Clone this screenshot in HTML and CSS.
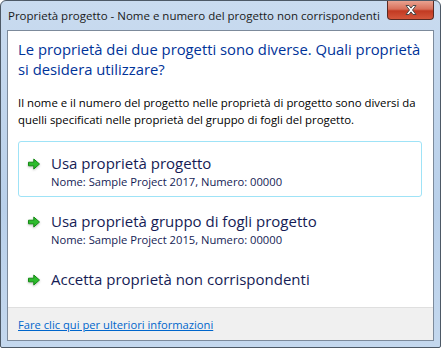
FILE: index.html
```html
<!DOCTYPE html>
<html lang="it">
<head>
    <meta charset="UTF-8">
    <title>Proprietà progetto</title>
    <link rel="stylesheet" href="styles.css">
</head>
<body>
    <div class="finestra">
        <div class="barra-titolo">
            <span class="titolo">Proprietà progetto - Nome e numero del progetto non corrispondenti</span>
            <div class="chiudi">
                <svg width="16" height="12" viewBox="0 0 16 12">
                    <path d="M3 1.5h3l2 2.6 2-2.6h3l-3.5 4.5 3.5 4.5h-3l-2-2.6-2 2.6h-3l3.5-4.5z" fill="#fff" stroke="#4a4a4a" stroke-width="1" stroke-linejoin="round"/>
                </svg>
            </div>
        </div>

        <div class="contenuto">
            <div class="principale">
                <h1 class="istruzione">Le proprietà dei due progetti sono diverse. Quali proprietà si desidera utilizzare?</h1>
                <p class="testo">Il nome e il numero del progetto nelle proprietà di progetto sono diversi da quelli specificati nelle proprietà del gruppo di fogli del progetto.</p>

                <div class="comando attivo">
                    <svg class="freccia" width="14" height="14" viewBox="0 0 14 14">
                        <path d="M1.5 5.2h5.3V2l5.7 5-5.7 5V8.8H1.5z" fill="#2dbb2d" stroke="#158a15" stroke-width="1" stroke-linejoin="round"/>
                    </svg>
                    <div>
                        <div class="comando-titolo">Usa proprietà progetto</div>
                        <div class="comando-nota">Nome: Sample Project 2017, Numero: 00000</div>
                    </div>
                </div>

                <div class="comando">
                    <svg class="freccia" width="14" height="14" viewBox="0 0 14 14">
                        <path d="M1.5 5.2h5.3V2l5.7 5-5.7 5V8.8H1.5z" fill="#2dbb2d" stroke="#158a15" stroke-width="1" stroke-linejoin="round"/>
                    </svg>
                    <div>
                        <div class="comando-titolo">Usa proprietà gruppo di fogli progetto</div>
                        <div class="comando-nota">Nome: Sample Project 2015, Numero: 00000</div>
                    </div>
                </div>

                <div class="comando">
                    <svg class="freccia" width="14" height="14" viewBox="0 0 14 14">
                        <path d="M1.5 5.2h5.3V2l5.7 5-5.7 5V8.8H1.5z" fill="#2dbb2d" stroke="#158a15" stroke-width="1" stroke-linejoin="round"/>
                    </svg>
                    <div>
                        <div class="comando-titolo">Accetta proprietà non corrispondenti</div>
                    </div>
                </div>
            </div>

            <div class="piede">
                <a href="#" class="link">Fare clic qui per ulteriori informazioni</a>
            </div>
        </div>
    </div>
</body>
</html>
```

FILE: styles.css
```css
body {
    margin: 0;
    font-family: 'Open Sans', 'Noto Sans', sans-serif;
    background: #fff;
}

.finestra {
    width: 441px;
    height: 348px;
    box-sizing: border-box;
    border: 1px solid #4d5966;
    border-radius: 6px 6px 2px 2px;
    background: linear-gradient(to bottom, #c9dbef, #b9d0ea 60%, #c4d8ee);
    padding: 0 6px 6px 6px;
    display: flex;
    flex-direction: column;
}

.barra-titolo {
    height: 29px;
    display: flex;
    align-items: flex-start;
}

.titolo {
    font-size: 11.5px;
    color: #1a1a1a;
    margin-top: 7px;
    margin-left: 1px;
    white-space: nowrap;
}

.chiudi {
    margin-left: auto;
    width: 47px;
    height: 19px;
    box-sizing: border-box;
    border: 1px solid #5b2a22;
    border-top: none;
    border-radius: 0 0 4px 4px;
    background: linear-gradient(to bottom, #e9a290, #d8705a 45%, #c23a22 55%, #d4563b);
    display: flex;
    align-items: center;
    justify-content: center;
}

.contenuto {
    flex: 1;
    border: 1px solid #7c8a9b;
    background: #fff;
    display: flex;
    flex-direction: column;
}

.principale {
    flex: 1;
    padding: 8px 2px 0 10px;
}

.istruzione {
    margin: 0;
    font-size: 14.8px;
    font-weight: normal;
    line-height: 20px;
    color: #003399;
}

.testo {
    margin: 15px 9px 13px 0;
    font-size: 11.4px;
    line-height: 17px;
    color: #000;
}

.comando {
    display: flex;
    align-items: flex-start;
    border: 1px solid transparent;
    border-radius: 3px;
    padding: 11px 8px 6px 8px;
    margin: 0 9px 2px 0;
    color: #151c55;
}

.comando.attivo {
    border-color: #9fe3f7;
}

.freccia {
    margin-top: 4px;
    margin-right: 10px;
    flex-shrink: 0;
    filter: drop-shadow(0 1px 1px rgba(0, 0, 0, 0.25));
}

.comando-titolo {
    font-size: 15px;
    line-height: 21px;
}

.comando-nota {
    font-size: 11.2px;
    line-height: 16px;
}

.piede {
    height: 32px;
    border-top: 1px solid #dfdfdf;
    background: #f0f0f0;
    display: flex;
    align-items: center;
    padding-left: 10px;
}

.link {
    font-size: 11.2px;
    color: #0066cc;
}
```
